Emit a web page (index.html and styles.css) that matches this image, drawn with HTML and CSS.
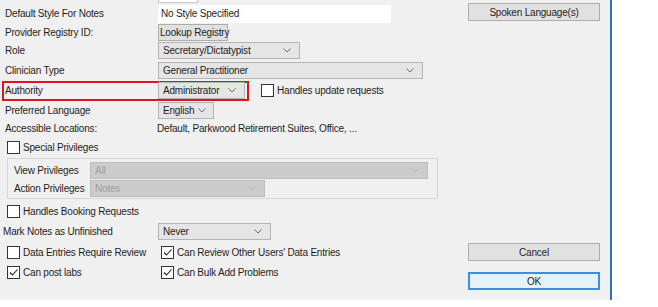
FILE: index.html
```html
<!DOCTYPE html>
<html lang="en">

<head>
    <meta charset="UTF-8">
    <title>User Settings</title>
    <link rel="stylesheet" href="styles.css">
</head>

<body>
    <div class="dialog">
        <div class="form">
            <!-- верх попереднього поля, обрізаний -->
            <div class="stub"><span class="stub-box"></span></div>

            <div class="row r1">
                <span class="lbl">Default Style For Notes</span>
                <div class="textbox">No Style Specified</div>
            </div>
            <div class="row r2">
                <span class="lbl">Provider Registry ID:</span>
                <button class="btn lookup">Lookup Registry</button>
            </div>
            <div class="row r3">
                <span class="lbl">Role</span>
                <div class="combo w-role"><span>Secretary/Dictatypist</span><svg class="chev" viewBox="0 0 8 5"><path d="M0.5 0.5 L4 4 L7.5 0.5" /></svg></div>
            </div>
            <div class="row r4">
                <span class="lbl">Clinician Type</span>
                <div class="combo w-clin"><span>General Practitioner</span><svg class="chev" viewBox="0 0 8 5"><path d="M0.5 0.5 L4 4 L7.5 0.5" /></svg></div>
            </div>
            <div class="row r5">
                <div class="highlight">
                    <span class="lbl-in">Authority</span>
                    <div class="combo w-auth"><span>Administrator</span><svg class="chev" viewBox="0 0 8 5"><path d="M0.5 0.5 L4 4 L7.5 0.5" /></svg></div>
                </div>
                <label class="check upd"><span class="box"></span>Handles update requests</label>
            </div>
            <div class="row r6">
                <span class="lbl">Preferred Language</span>
                <div class="combo w-lang"><span>English</span><svg class="chev" viewBox="0 0 8 5"><path d="M0.5 0.5 L4 4 L7.5 0.5" /></svg></div>
            </div>
            <div class="row r7">
                <span class="lbl">Accessible Locations:</span>
                <span class="value">Default, Parkwood Retirement Suites, Office, ...</span>
            </div>
            <div class="row r8">
                <label class="check left"><span class="box"></span>Special Privileges</label>
            </div>

            <div class="group">
                <div class="grow g1">
                    <span class="glbl">View Privileges</span>
                    <div class="combo disabled w-view"><span>All</span><svg class="chev" viewBox="0 0 8 5"><path d="M0.5 0.5 L4 4 L7.5 0.5" /></svg></div>
                </div>
                <div class="grow g2">
                    <span class="glbl">Action Privileges</span>
                    <div class="combo disabled w-act"><span>Notes</span><svg class="chev" viewBox="0 0 8 5"><path d="M0.5 0.5 L4 4 L7.5 0.5" /></svg></div>
                </div>
            </div>

            <div class="row r9">
                <label class="check left"><span class="box"></span>Handles Booking Requests</label>
            </div>
            <div class="row r10">
                <span class="lbl lbl-mark">Mark Notes as Unfinished</span>
                <div class="combo w-never"><span>Never</span><svg class="chev" viewBox="0 0 8 5"><path d="M0.5 0.5 L4 4 L7.5 0.5" /></svg></div>
            </div>
            <div class="row r11">
                <label class="check left cell"><span class="box"></span>Data Entries Require Review</label>
                <label class="check"><span class="box"><svg viewBox="0 0 11 11"><path d="M2 5.5 L4.5 8 L9.5 2.5" /></svg></span>Can Review Other Users' Data Entries</label>
            </div>
            <div class="row r12">
                <label class="check left cell"><span class="box"><svg viewBox="0 0 11 11"><path d="M2 5.5 L4.5 8 L9.5 2.5" /></svg></span>Can post labs</label>
                <label class="check"><span class="box"><svg viewBox="0 0 11 11"><path d="M2 5.5 L4.5 8 L9.5 2.5" /></svg></span>Can Bulk Add Problems</label>
            </div>
        </div>

        <div class="side">
            <button class="btn wide">Spoken Language(s)</button>
            <button class="btn wide cancel">Cancel</button>
            <button class="btn wide ok">OK</button>
        </div>
    </div>
</body>

</html>
```

FILE: styles.css
```css
/* Діалог налаштувань користувача */
* {
    box-sizing: border-box;
}

body {
    margin: 0;
    padding: 0;
    background-color: #ffffff;
    font-family: "Liberation Sans", Arial, sans-serif;
    font-size: 10px;
    letter-spacing: -0.2px;
    color: #1e1e1e;
}

.dialog {
    display: flex;
    width: 612px;
    height: 300px;
    background-color: #f0f0f0;
    border-right: 2px solid #2a72c8;
}

.form {
    width: 468px;
    display: flex;
    flex-direction: column;
}

.stub {
    height: 4px;
    padding-left: 158px;
}

.stub-box {
    display: block;
    width: 40px;
    height: 3px;
    background-color: #ffffff;
    border: 1px solid #c8c8c8;
    border-top: none;
}

.row {
    display: flex;
    align-items: center;
    flex-shrink: 0;
}

.r1 { height: 19px; }
.r2 { height: 18px; }
.r3 { height: 19px; }
.r4 { height: 20px; }
.r5 { height: 21px; }
.r6 { height: 18px; }
.r7 { height: 18px; }
.r8 { height: 20px; }
.r9 { height: 20px; margin-top: 2px; }
.r10 { height: 21px; }
.r11 { height: 20px; }
.r12 { height: 20px; }

.lbl {
    width: 158px;
    padding-left: 5px;
    white-space: nowrap;
}

.lbl-mark {
    padding-left: 3px;
}

.value {
    margin-left: -1px;
    white-space: nowrap;
}

.textbox {
    width: 233px;
    height: 18px;
    background-color: #ffffff;
    padding: 3px 3px;
    line-height: 12px;
}

.combo {
    height: 17px;
    display: flex;
    align-items: center;
    justify-content: space-between;
    padding: 0 8px 0 4px;
    background-color: #e5e5e5;
    border: 1px solid #b4b4b4;
    white-space: nowrap;
}

.chev {
    width: 8px;
    height: 5px;
    flex-shrink: 0;
    fill: none;
    stroke: #6a6a6a;
    stroke-width: 1;
}

.combo.disabled {
    background-color: #cccccc;
    border-color: #bdbdbd;
    color: #a0a0a0;
}

.combo.disabled .chev {
    stroke: #b4b4b4;
}

.w-role { width: 142px; }
.w-clin { width: 265px; }
.w-auth { width: 87px; }
.w-lang { width: 56px; padding-right: 7px; }
.w-view { width: 338px; }
.w-act { width: 175px; }
.w-never { width: 113px; }

.highlight {
    display: flex;
    align-items: center;
    margin-left: 2px;
    width: 247px;
    height: 20px;
    border: 2px solid #e3131e;
}

.lbl-in {
    width: 154px;
    padding-left: 1px;
}

.btn {
    font-family: inherit;
    font-size: 10px;
    letter-spacing: -0.2px;
    color: #1e1e1e;
    background-color: #e1e1e1;
    border: 1px solid #adadad;
    padding: 0;
    height: 17px;
    white-space: nowrap;
}

.lookup {
    width: 70px;
    padding: 0 1px;
}

.check {
    display: flex;
    align-items: center;
    white-space: nowrap;
}

.check.left {
    padding-left: 7px;
}

.check.cell {
    width: 161px;
}

.check.upd {
    margin-left: 12px;
}

.box {
    width: 13px;
    height: 13px;
    margin-right: 3px;
    background-color: #ffffff;
    border: 1px solid #333333;
    display: flex;
    align-items: center;
    justify-content: center;
}

.box svg {
    width: 11px;
    height: 11px;
    fill: none;
    stroke: #222222;
    stroke-width: 1.1;
}

.group {
    margin-top: 1px;
    margin-left: 7px;
    width: 431px;
    height: 41px;
    border: 1px solid #d6d6d6;
    padding-top: 2px;
    flex-shrink: 0;
}

.grow {
    display: flex;
    align-items: center;
}

.g1 { height: 18px; }
.g2 { height: 18px; }

.glbl {
    width: 82px;
    padding-left: 6px;
    white-space: nowrap;
}

.side {
    width: 132px;
    display: flex;
    flex-direction: column;
    padding-top: 3px;
}

.btn.wide {
    width: 132px;
    height: 18px;
}

.cancel {
    margin-top: 222px;
}

.ok {
    margin-top: 11px;
    background-color: #e5f1fb;
    border: 2px solid #3c8fdc;
}
```
